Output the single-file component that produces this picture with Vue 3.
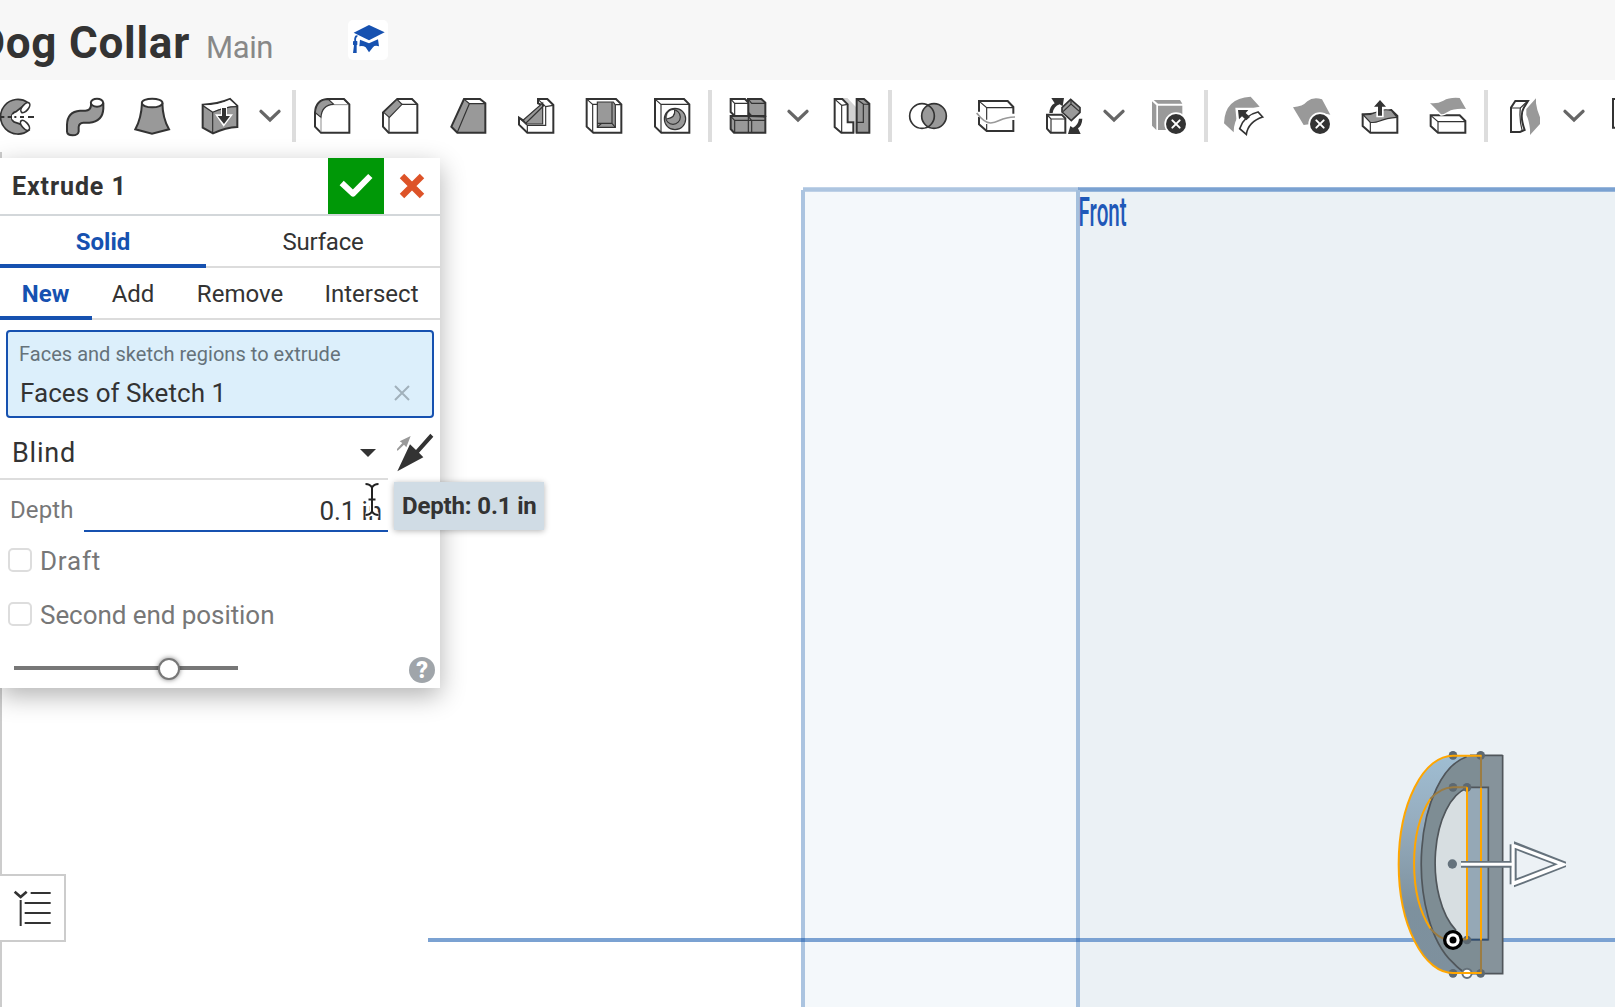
<script setup>
const modes = [
  { label: 'New', cls: 'new', active: true },
  { label: 'Add', cls: 'add' },
  { label: 'Remove', cls: 'remove' },
  { label: 'Intersect', cls: 'intersect' }
]
const options = [
  { label: 'Draft', cls: 'draft' },
  { label: 'Second end position', cls: 'second' }
]
</script>

<template>
  <div class="app">
    <header class="topbar">
      <span class="doc-name">Dog Collar</span>
      <span class="doc-branch">Main</span>
      <span class="edu">
        <svg viewBox="0 0 120 120" width="40" height="40">
          <path d="M63 15 110 37 63 61 17 38Z" fill="#1651b0" />
          <path d="M24 46Q17 52 19 63L15 64V74L18 76 15 99H26V76L28 74V64L24 62Q23 52 30 47Z" fill="#1651b0" />
          <path d="M36 59 63 70 90 58 93 79Q80 75 75 82L63 97 53 82Q45 76 34 79Z" fill="#1651b0" />
        </svg>
      </span>
    </header>

    <nav class="toolbar">
      <!-- revolve -->
      <svg class="tool" viewBox="-54 0 204 216">
        <path class="ln5 fl" d="M84 68A52 52 0 1 0 87 150L68 136Q56 130 48 128A17 17 0 0 1 48 95L62 84Z" />
        <ellipse class="ln5 wh" cx="76" cy="83" rx="9" ry="18" transform="rotate(40 76 83)" />
        <ellipse class="ln5 wh" cx="75" cy="136" rx="9" ry="18" transform="rotate(-40 75 136)" />
        <path d="M36 111H60" stroke="#fff" stroke-width="14" />
        <path class="ln" d="M0 111H13M23 111H35M43 111H49M60 111H72M84 111H102" />
      </svg>
      <!-- sweep -->
      <svg class="tool" viewBox="150 0 204 216">
        <path class="ln fl" d="M273 68V76Q272 91 256 92H240Q202 95 201 134V155Q202 166 218 166T236 155V141Q237 129 250 128H268Q308 125 310 86V68" />
        <ellipse class="ln wh" cx="291" cy="68" rx="18.500" ry="12" />
      </svg>
      <!-- loft -->
      <svg class="tool" viewBox="354 0 204 216">
        <path class="ln fl" d="M426 69Q424 115 406 148L456 161 507 148Q488 115 487 69" />
        <ellipse class="ln wh" cx="456.500" cy="69" rx="31" ry="13" />
      </svg>
      <!-- thicken -->
      <svg class="tool" viewBox="558 0 204 216">
        <path class="ln fl" d="M608 74Q652 73 690 57L712 78V141Q678 142 639 160L608 143Z" />
        <path d="M611 76Q655 76 689 59L709 77Q675 78 639 95Z" fill="#fff" />
        <path class="thin" d="M609 77 638 97V158M638 97Q675 80 711 80" />
        <path d="M663 79H681V103H699L671 140 645 103H663Z" fill="#fff" />
        <path d="M666 84H678V108H690L672 132 653 108H666Z" fill="#333" />
      </svg>
      <svg class="caret" viewBox="762 0 108 216"><path d="M783 94 810 120 837 94" /></svg>
      <i class="sep"></i>
      <!-- fillet -->
      <svg class="tool" viewBox="24 0 204 216">
        <path class="ln wh" d="M112 57H162L178 73V158H93L75 140V98Q77 60 112 57Z" />
        <path class="thin fl" d="M76 98Q79 58 115 58L131 73Q95 75 93 112Z" />
        <path d="M93 111V156M131 74H176" fill="none" stroke="#8d8d8d" stroke-width="3" />
        <path class="thin" d="M162 58 177 73" />
      </svg>
      <!-- chamfer -->
      <svg class="tool" viewBox="228 0 204 216">
        <path class="ln wh" d="M322 57H366L382 73V158H296L279 140V97Z" />
        <path class="thin fl" d="M321 58 336 73 298 112 281 97Z" />
        <path class="thin" d="M336 73H381M297 112V157" />
      </svg>
      <!-- draft -->
      <svg class="tool" viewBox="432 0 204 216">
        <path class="ln fl" d="M522 57H570L586 70V158H502L484 140Z" />
        <path d="M525 60H568L580 69H539Z" fill="#fff" />
        <path class="thin" d="M523 58 538 71H585M538 71 502 157" />
      </svg>
      <!-- rib -->
      <svg class="tool" viewBox="636 0 204 216">
        <path class="ln wh" d="M744 57H772L790 75V158H712L687 134V113L708 127 759 76 744 70Z" />
        <path class="thin fl" d="M700 120 758 69V132H709L703 125Z" />
        <path class="thin" d="M708 129 760 78M744 58 767 80V136H712V157M767 80 789 76M688 114 712 136" />
      </svg>
      <!-- shell -->
      <svg class="tool" viewBox="-60 0 204 216">
        <path class="ln wh" d="M-10 57H78L94 73V158H10L-10 140Z" />
        <path class="thin fl" d="M22 66H70L76 75V142H22Z" />
        <path class="thin" d="M-9 58 8 73H22M8 73V157M66 67V130H22M66 130 76 142M22 141 34 131M76 74H93" />
      </svg>
      <!-- hole -->
      <svg class="tool" viewBox="144 0 204 216">
        <path class="ln wh" d="M195 57H282L298 73V158H214L195 140Z" />
        <path class="thin" d="M196 58 213 73H297M213 73V157" />
        <circle class="thin fl" cx="255" cy="117" r="32" />
        <circle class="thin fl" cx="249" cy="111" r="22" />
        <path d="M231 111Q232 91 252 90 257 112 232 117Z" fill="#fff" />
        <path class="thin" d="M254 90Q257 113 230 117" />
      </svg>
      <i class="sep"></i>
      <!-- linear pattern -->
      <svg class="tool" viewBox="372 0 204 216">
        <path class="ln fl" d="M422 108H475L526 110V158H432L422 147Z" />
        <path class="ln fl" d="M474 57H514L526 68V108H484L474 97Z" />
        <path class="ln wh" d="M422 57H465L475 68V108H434L422 96Z" />
        <path class="thin" d="M423 58 434 70H475M434 70V107M475 58 485 70H525M423 110 434 121H475L485 121H525M434 121V157M475 110 485 121M475 57V158M422 109H526M485 121V157" />
      </svg>
      <svg class="caret" viewBox="576 0 108 216"><path d="M597 94 624 120 651 94" /></svg>
      <!-- mirror -->
      <svg class="tool" viewBox="684 0 204 216">
        <path d="M757 54H772L800 83V158H793V124H776V74Z" fill="#d2d2d2" />
        <path class="ln wh" d="M734 57H757L773 73V127H790V158H754L734 141Z" />
        <path class="ln fl" d="M800 57H822L838 71V158H800Z" />
        <path class="thin" d="M735 58 755 76V157M755 76 773 73M820 72 837 73M820 72V127H801M800 58 820 72" />
      </svg>
      <i class="sep"></i>
      <!-- boolean -->
      <svg class="tool" viewBox="42 0 204 216">
        <circle cx="126" cy="108" r="37" fill="#fff" />
        <circle cx="162" cy="108" r="37" fill="#999" />
        <circle class="ln5" cx="126" cy="108" r="37" />
        <circle class="ln5" cx="162" cy="108" r="37" />
      </svg>
      <!-- split -->
      <svg class="tool" viewBox="246 0 204 216">
        <path class="ln" d="M297 95V63H383L400 81V101M297 111V133L320 153H400V120" />
        <path class="thin" d="M298 64 320 83H399M320 83V119M320 132V152" />
        <path d="M290 99Q313 129 332 129C358 129 360 111 405 111" fill="none" stroke="#999" stroke-width="5" />
      </svg>
      <!-- transform -->
      <svg class="tool" viewBox="450 0 204 216">
        <path class="ln wh" d="M501 104H545L556 115V158H512L501 146Z" />
        <path class="thin" d="M502 105 513 117H555M513 117V157" />
        <path class="fl ln5" d="M572 58 600 83V97L574 122 546 96V83Z" />
        <path class="thin" d="M549 95 573 72 599 95M573 59V72" />
        <path d="M508 99Q509 78 524 70L514 54H552L548 79 539 73Q521 79 518 99ZM607 116Q606 136 594 145L602 162H564L571 138 579 143Q594 136 597 116Z" fill="#333" />
      </svg>
      <svg class="caret" viewBox="654 0 108 216"><path d="M675 94 702 120 729 94" /></svg>
      <!-- delete part -->
      <svg class="tool" viewBox="762 0 204 216">
        <path d="M821 60H900L907 71H834ZM816 64 829 76V150L816 137ZM834 77H907V150H834Z" fill="#999" />
        <circle cx="888" cy="132" r="35" fill="#fff" />
        <circle cx="888" cy="132" r="30" fill="#333" />
        <path d="M877 121 899 143M899 121 877 143" class="cross" />
      </svg>
      <i class="sep"></i>
      <!-- modify fillet -->
      <svg class="tool" viewBox="60 0 204 216">
        <path d="M102 130Q104 54 182 50L209 80Q131 87 131 157Z" fill="#999" />
        <path d="M136 83H190L177 98 191 112 171 130 155 114 140 127Z" fill="#fff" />
        <path class="ln5 wh" d="M149 146Q163 105 204 96L218 111Q175 125 169 163Z" />
        <path d="M144 90H175L167 99 180 111 169 121 156 109 147 118Z" fill="#333" />
      </svg>
      <!-- delete face -->
      <svg class="tool" viewBox="264 0 204 216">
        <path d="M309 82Q338 80 352 64 369 50 396 58L421 104Q392 96 370 112 355 126 357 133L341 135Z" fill="#999" />
        <circle cx="390" cy="132" r="35" fill="#fff" />
        <circle cx="390" cy="132" r="30" fill="#333" />
        <path d="M379 121 401 143M401 121 379 143" class="cross" />
      </svg>
      <!-- move face -->
      <svg class="tool" viewBox="468 0 204 216">
        <path class="ln wh" d="M518 103Q550 104 604 90L622 108V158H541L518 138Z" />
        <path class="thin fl" d="M519 104Q542 106 560 96 578 86 604 91L621 112Q590 114 567 124 555 129 541 127Z" />
        <path class="thin" d="M541 127V157" />
        <path d="M570 55 593 83H581V112H559V83H547Z" fill="#fff" />
        <path d="M570 60 588 80H576V107H564V80H552Z" fill="#333" />
      </svg>
      <!-- replace face -->
      <svg class="tool" viewBox="672 0 204 216">
        <path class="ln wh" d="M722 106H809L826 123V158H744L722 138Z" />
        <path class="thin" d="M723 107 744 125H825M744 125V157" />
        <path d="M720 69Q742 72 760 62 780 51 809 54L828 87Q794 84 774 95 760 104 753 103Z" fill="#999" stroke="#fff" stroke-width="8" paint-order="stroke" />
      </svg>
      <i class="sep"></i>
      <!-- offset surface -->
      <svg class="tool" viewBox="900 0 204 216">
        <path class="ln wh" d="M963 83 976 63H1014L1001 84Q988 106 1004 150L990 156H963Z" />
        <path class="thin" d="M964 84H991L1012 64M991 84Q987 120 997 154" />
        <path d="M1036 50 1005 84Q1020 130 1015 166L1054 132V92Z" fill="#fff" />
        <path d="M1038 55V70Q1040 88 1050 112V132L1020 165V148Q1017 120 1009 105V87Z" fill="#999" />
      </svg>
      <svg class="caret" viewBox="1104 0 108 216"><path d="M1125 94 1152 120 1179 94" /></svg>
      <!-- plane -->
      <svg class="tool" viewBox="1212 0 204 216">
        <path class="ln" d="M1269 57H1350V143H1269Z" />
      </svg>
    </nav>

    <main class="stage">
      <svg class="scene" width="1615" height="855" viewBox="0 152 1615 855">
        <defs>
          <linearGradient id="side" x1="0" y1="0" x2="0" y2="1">
            <stop offset="0" stop-color="#9fbdd2" />
            <stop offset=".3" stop-color="#96adbf" />
            <stop offset=".7" stop-color="#7d919e" />
            <stop offset="1" stop-color="#7e909d" />
          </linearGradient>
        </defs>
        <rect x="803" y="190" width="275" height="820" fill="#f4f8fb" />
        <rect x="1078" y="190" width="540" height="820" fill="#ebf1f5" />
        <path d="M803 189.500H1079" stroke="#adc5e0" stroke-width="4.500" />
        <path d="M1078 189.500H1615" stroke="#7aa1d1" stroke-width="4.500" />
        <path d="M803 190V1007" stroke="#abc4e0" stroke-width="4" />
        <path d="M1078 190V1007" stroke="#a5c0dd" stroke-width="4" />
        <path d="M428 940H1615" stroke="#7ba2d2" stroke-width="4" />
        <path d="M801 940H805M1076 940H1080" stroke="#5585c3" stroke-width="4" />
        <text class="plane-name" transform="translate(1078.500 225.500) scale(.51 1)">Front</text>

        <g transform="translate(1370 735) scale(.33333)">
          <path d="M333 62H249A163 326 0 0 0 249 714H333Z" fill="url(#side)" />
          <path d="M398 62H315A163 326 0 0 0 315 716H398ZM355 159V614H315A118 229 0 0 1 315 159Z" fill="#7e8d94" fill-rule="evenodd" />
          <path d="M333 62H398V716H333V614H355V159H333Z" fill="#86939b" />
          <path d="M291 161A118 229 0 0 0 262 592L272 612H291Z" fill="#d7dee1" />
          <path d="M291 159H355V614H291Z" fill="#95a8b6" />
          <path d="M398 61H300M398 60V716H290Q270 706 249 683A163 326 0 0 1 290 65M291 157H355V614H291M258 586A118 229 0 0 1 291 159" fill="none" stroke="#50565b" stroke-width="5" />
          <path d="M300 614H355" stroke="#2d4e75" stroke-width="5" />
          <g fill="#5d6972">
            <circle cx="249" cy="61" r="13" /><circle cx="332" cy="61" r="13" />
            <circle cx="249" cy="157" r="13" /><circle cx="291" cy="157" r="13" />
            <circle cx="291" cy="615" r="13" /><circle cx="249" cy="715" r="13" /><circle cx="332" cy="715" r="13" />
          </g>
          <circle cx="291" cy="715" r="14" fill="#fff" stroke="#66727a" stroke-width="6" />
          <path d="M333 62V714M291 157H249Q211 158 181 192M181 580Q205 609 230 613H291" fill="none" stroke="#9b7c43" stroke-width="6" />
          <path d="M333 159V614M291 157V613M181 192C116 290 116 480 181 580M335 62H249A163 326 0 0 0 249 714H335" fill="none" stroke="#ffa600" stroke-width="6" />
          <circle cx="247" cy="387" r="14" fill="#65727c" />
          <path d="M273 388H425" stroke="#65727c" stroke-width="20" />
          <path d="M422 328V448" stroke="#65727c" stroke-width="6" />
          <path d="M432 319 588 380V396L432 457Z" fill="#65727c" />
          <path d="M425 328H434L588 386V391L434 450H425Z" fill="#fff" />
          <path d="M434 338V438L564 388Z" fill="#65727c" />
          <path d="M440 346V430L550 388Z" fill="#ecf1f5" />
          <path d="M273 388H432" stroke="#fff" stroke-width="9" />
          <circle cx="249" cy="615" r="30" fill="#000" />
          <circle cx="249" cy="615" r="20" fill="#fff" />
          <circle cx="249" cy="615" r="10.500" fill="#000" />
        </g>
      </svg>

      <button class="tree-toggle">
        <svg width="40" height="40" viewBox="0 0 120 120" fill="none" stroke="#333" stroke-width="6">
          <path d="M8 5 26 21 44 5" stroke-width="8" />
          <path d="M56 9H116M26 30V108M38 39H116M38 69H116M38 99H116" />
        </svg>
      </button>

      <section class="panel">
        <div class="panel-head">
          <span class="title">Extrude 1</span>
          <span class="accept">
            <svg width="56" height="56" viewBox="0 0 168 168"><path d="M41 75 75 107 127 54" fill="none" stroke="#fff" stroke-width="18" stroke-linejoin="round" /></svg>
          </span>
          <span class="cancel">
            <svg width="56" height="56" viewBox="0 0 168 168"><path d="M54 54 114 114M114 54 54 114" fill="none" stroke="#dd5328" stroke-width="19" /></svg>
          </span>
        </div>
        <div class="tabs">
          <span class="tab solid active">Solid</span>
          <span class="tab surface">Surface</span>
        </div>
        <div class="tabs">
          <span v-for="m in modes" :key="m.label" class="tab" :class="[m.cls, { active: m.active }]">{{ m.label }}</span>
        </div>
        <div class="selection">
          <div class="sel-label">Faces and sketch regions to extrude</div>
          <div class="sel-row">
            <span class="sel-item">Faces of Sketch 1</span>
            <svg width="16" height="16" viewBox="0 0 16 16"><path d="M1 1 15 15M15 1 1 15" stroke="#a1b1bb" stroke-width="2" /></svg>
          </div>
        </div>
        <div class="end-row">
          <div class="select">
            <span>Blind</span>
            <svg width="16" height="8" viewBox="0 0 16 8"><path d="M0 0H16L8 8Z" fill="#333" /></svg>
          </div>
          <svg class="flip" width="38" height="40" viewBox="1190 40 114 120">
            <path d="M1188 90 1206 70 1198 65 1231 49 1218 83 1211 75 1192 93Z" fill="#999" />
            <path d="M1191 155 1229 74 1247 91 1290 42 1299 51 1256 99 1269 113Z" fill="#333" />
          </svg>
        </div>
        <div class="depth-row">
          <span class="depth-label">Depth</span>
          <span class="depth-value">0.1 in</span>
        </div>
        <div v-for="o in options" :key="o.label" class="check-row" :class="o.cls">
          <span class="box"></span><span class="check-text">{{ o.label }}</span>
        </div>
        <div class="foot">
          <div class="slider"><span class="knob"></span></div>
          <span class="help">?</span>
        </div>
      </section>

      <svg class="cursor" width="16" height="36" viewBox="0 0 16 36" fill="none">
        <path d="M1.500 2Q6 2 8 5.500 10 2 14.500 2M8 5V30M1.500 33Q6 33 8 29.500 10 33 14.500 33M4.500 17.500H11.500" stroke="#fff" stroke-width="5" />
        <path d="M1.500 2Q6 2 8 5.500 10 2 14.500 2M8 5V30M1.500 33Q6 33 8 29.500 10 33 14.500 33M4.500 17.500H11.500" stroke="#222" stroke-width="2" />
      </svg>
      <div class="tip">Depth: 0.1 in</div>
    </main>
  </div>
</template>

<style>
body { margin: 0; overflow: hidden; background: #fff; }
</style>

<style scoped>
.app { width: 1615px; height: 1007px; overflow: hidden; display: flex; flex-direction: column; font-family: Roboto, "Liberation Sans", sans-serif; color: #333; background: #fff; }
.app * { box-sizing: border-box; }
svg { display: block; flex: none; }
.topbar { flex: none; height: 80px; background: #f7f7f7; display: flex; align-items: flex-start; white-space: nowrap; }
.doc-name { width: 206px; flex: none; display: flex; justify-content: flex-end; padding-right: 16px; font-size: 44px; font-weight: 700; line-height: 86px; letter-spacing: .75px; }
.doc-branch { width: 142px; flex: none; font-size: 31px; line-height: 95px; letter-spacing: -.4px; color: #888; }
.edu { margin-top: 20px; width: 40px; height: 40px; background: #fff; border-radius: 5px; }

.toolbar { flex: none; height: 72px; display: flex; align-items: flex-start; margin-left: -18px; width: 1700px; }
.tool { width: 68px; height: 72px; }
.caret { width: 36px; height: 72px; }
.caret path { fill: none; stroke: #666; stroke-width: 10; stroke-linecap: round; }
.sep { flex: none; width: 4px; height: 52px; margin: 10px 2px 0; background: #ddd; }
.ln { fill: none; stroke: #333; stroke-width: 6; }
.ln5 { fill: none; stroke: #333; stroke-width: 5; }
.thin { fill: none; stroke: #333; stroke-width: 3.500; }
.fl { fill: #999; }
.wh { fill: #fff; }
.cross { stroke: #fff; stroke-width: 6; stroke-linecap: round; }

.stage { flex: 1; position: relative; background: #fff; border-left: 2px solid #ccc; }
.scene { margin-left: -2px; clip-path: inset(0 0 0 2px); }
.plane-name { font-size: 40.500px; font-weight: 500; fill: #1f58b8; }
.tree-toggle { position: absolute; left: -4px; top: 722px; width: 68px; height: 68px; border: 2px solid #ccc; background: #fff; padding: 0 0 0 12px; display: flex; align-items: flex-start; }
.tree-toggle svg { width: 40px; height: 40px; margin-top: 14px; }

.panel { position: absolute; left: -2px; top: 6px; width: 440px; height: 530px; background: #fff; box-shadow: 0 8px 24px rgba(0, 0, 0, .3); }
.panel-head { height: 58px; border-bottom: 2px solid #d3d7da; display: flex; }
.title { flex: 1; padding-left: 12px; font-size: 25px; font-weight: 700; line-height: 58px; letter-spacing: .9px; }
.accept { background: #009807; width: 56px; height: 56px; }
.cancel { width: 56px; height: 56px; }
.tabs { display: flex; height: 52px; }
.tab { text-align: center; font-size: 24px; line-height: 53px; height: 52px; border-bottom: 2px solid #dcdcdc; }
.tab.active { color: #1651b0; font-weight: 700; border-bottom: 4px solid #1651b0; }
.solid { width: 206px; }
.surface { width: 234px; letter-spacing: -.2px; }
.new { width: 91px; }
.tab.new { width: 92px; padding-right: 1px; }
.add { width: 82px; }
.remove { width: 132px; }
.intersect { width: 134px; padding-right: 3px; }
.selection { margin: 10px 6px 0; height: 88px; border: 2px solid #1651b0; border-radius: 4px; background: #dceffb; padding: 7px 22px 0 11px; }
.sel-label { font-size: 20px; line-height: 30px; letter-spacing: .03px; color: #65727a; white-space: nowrap; }
.sel-row { display: flex; justify-content: space-between; align-items: center; padding-left: 1px; line-height: 48px; font-size: 26px; letter-spacing: .05px; }
.end-row { display: flex; height: 62px; }
.select { width: 388px; border-bottom: 2px solid #ddd; display: flex; justify-content: space-between; align-items: center; font-size: 27px; line-height: 50px; padding: 10px 12px 0 12px; letter-spacing: .8px; }
.flip { margin: 15px 0 0 9px; }
.depth-row { display: flex; height: 52px; width: 388px; color: #777; }
.depth-label { width: 84px; padding-left: 10px; font-size: 24px; line-height: 60px; letter-spacing: .1px; }
.depth-value { flex: 1; border-bottom: 2px solid #1651b0; text-align: right; padding-right: 6px; font-size: 26px; line-height: 62px; letter-spacing: -.1px; color: #333; }
.check-row { display: flex; align-items: center; height: 54px; padding: 4px 0 0 8px; font-size: 26px; color: #777; }
.box { width: 24px; height: 24px; border: 2px solid #ddd; border-radius: 5px; margin: -2px 8px 0 0; }
.check-text { letter-spacing: -.06px; }
.draft .check-text { letter-spacing: .8px; }
.foot { display: flex; justify-content: space-between; padding: 14px 5px 0 14px; }
.slider { width: 224px; height: 4px; background: #777; margin-top: 12px; }
.knob { display: block; width: 22px; height: 22px; margin: -8px 0 0 144px; border-radius: 50%; background: #fff; border: 2px solid #777; box-shadow: 0 0 5px rgba(0, 0, 0, .5); }
.slider::before { content: ""; display: table; }
.help { width: 26px; height: 26px; margin-top: 3px; border-radius: 50%; background: #a0a5aa; color: #fff; font-size: 23px; font-weight: 900; line-height: 27px; text-align: center; }

.cursor { position: absolute; left: 362px; top: 330px; }
.tip { position: absolute; left: 392px; top: 330px; width: 150px; height: 48px; background: #d0dce5; font-size: 24px; font-weight: 700; line-height: 48px; padding-left: 8px; letter-spacing: -.15px; white-space: nowrap; box-shadow: 0 1px 6px rgba(0, 0, 0, .3); }
</style>
